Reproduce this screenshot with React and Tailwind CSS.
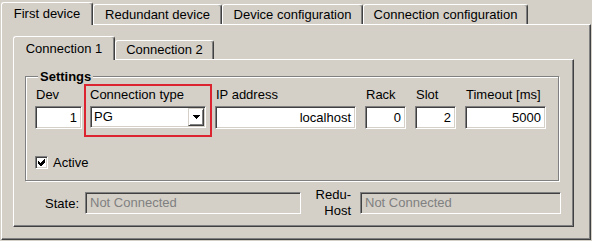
const sunken =
  'border border-t-[#808080] border-l-[#808080] border-r-white border-b-white shadow-[inset_1px_1px_#404040,inset_-1px_-1px_#d4d0c8]'
const raised =
  'border border-t-[#d4d0c8] border-l-[#d4d0c8] border-r-[#404040] border-b-[#404040] shadow-[inset_1px_1px_#fff,inset_-1px_-1px_#808080]'
const tabEdge =
  'border-t border-l border-r border-t-white border-l-white border-r-[#404040] shadow-[inset_-1px_0_#808080] rounded-t-[3px] text-center whitespace-nowrap bg-[#d4d0c8]'
const panelEdge =
  'border-t border-l border-r border-b border-t-white border-l-white border-r-[#404040] border-b-[#404040] shadow-[inset_-1px_-1px_#808080]'

function Field({ label, width, value, gap }) {
  return (
    <div className={`mt-[3px] ${gap}`}>
      <div className="h-[15px] pl-[1px] whitespace-nowrap">{label}</div>
      <div className={`mt-[4px] h-[23px] ${width} bg-white ${sunken} text-right pr-[4px] leading-[21px]`}>
        {value}
      </div>
    </div>
  )
}

export default function App() {
  return (
    <div className="w-[592px] h-[241px] overflow-hidden bg-[#d4d0c8] font-[family-name:Liberation_Sans,Arial,sans-serif] text-[13px] leading-[15px] text-black">
      {/* outer tab strip */}
      <div className="flex items-end h-[24px] pl-[1px]">
        <div className={`relative z-10 -mb-px h-[23px] w-[92px] pt-[3px] ${tabEdge}`}>First device</div>
        <div className={`h-[20px] w-[129px] pt-[2px] ${tabEdge}`}>Redundant device</div>
        <div className={`h-[20px] w-[141px] pt-[2px] ${tabEdge}`}>Device configuration</div>
        <div className={`h-[20px] w-[165px] pt-[2px] ${tabEdge}`}>Connection configuration</div>
      </div>

      <div className={`ml-[1px] w-[590px] h-[216px] pl-[11px] pt-[11px] ${panelEdge}`}>
        {/* inner tab strip */}
        <div className="flex items-end h-[23px]">
          <div className={`relative z-10 -mb-px h-[24px] w-[102px] pt-[4px] ${tabEdge}`}>Connection 1</div>
          <div className={`h-[19px] w-[99px] pt-[1px] ${tabEdge}`}>Connection 2</div>
        </div>

        <div className={`w-[561px] h-[168px] ${panelEdge}`}>
          <div className="relative ml-[11px] mt-[16px] w-[534px] h-[105px] border border-[#808080] shadow-[inset_1px_1px_#fff,1px_1px_#fff] pl-[9px] pt-[7px]">
            <div className="absolute -top-[8px] left-[12px] px-[2px] bg-[#d4d0c8] font-bold">Settings</div>

            <div className="flex items-start">
              <Field label="Dev" width="w-[47px]" value="1" gap="" />

              <div className="ml-[2px] w-[128px] h-[53px] border-2 border-[#dc2330] pl-[4px] pt-[1px]">
                <div className="h-[15px] whitespace-nowrap">Connection type</div>
                <div className={`mt-[4px] h-[22px] w-[116px] bg-white p-[1px] flex ${sunken}`}>
                  <div className="flex-1 pl-[2px] leading-[18px]">PG</div>
                  <div className={`w-[16px] h-[18px] flex items-center justify-center ${raised}`}>
                    <svg width="7" height="4" viewBox="0 0 7 4" shapeRendering="crispEdges">
                      <polygon points="0,0 7,0 3.5,4" fill="#000" />
                    </svg>
                  </div>
                </div>
              </div>

              <Field label="IP address" width="w-[141px]" value="localhost" gap="ml-[3px]" />
              <Field label="Rack" width="w-[41px]" value="0" gap="ml-[9px]" />
              <Field label="Slot" width="w-[41px]" value="2" gap="ml-[9px]" />
              <Field label="Timeout [ms]" width="w-[81px]" value="5000" gap="ml-[9px]" />
            </div>

            <div className="mt-[18px] flex items-center">
              <div className={`w-[13px] h-[13px] bg-white flex items-center justify-center ${sunken}`}>
                <svg width="7" height="7" viewBox="0 0 7 7" shapeRendering="crispEdges">
                  <polygon points="0,2 2,4 6,0 7,0 7,3 3,7 2,7 0,5" fill="#000" />
                </svg>
              </div>
              <span className="ml-[5px]">Active</span>
            </div>
          </div>

          <div className="mt-[11px] flex items-center h-[22px] pl-[25px]">
            <div className="w-[40px] text-right">State:</div>
            <div className={`ml-[6px] w-[216px] h-[22px] pl-[4px] leading-[20px] text-[#808080] ${sunken}`}>
              Not Connected
            </div>
            <div className="w-[50px] text-right leading-[16px]">
              Redu-
              <br />
              Host
            </div>
            <div className={`ml-[9px] w-[201px] h-[22px] pl-[4px] leading-[20px] text-[#808080] ${sunken}`}>
              Not Connected
            </div>
          </div>
        </div>
      </div>
    </div>
  )
}
